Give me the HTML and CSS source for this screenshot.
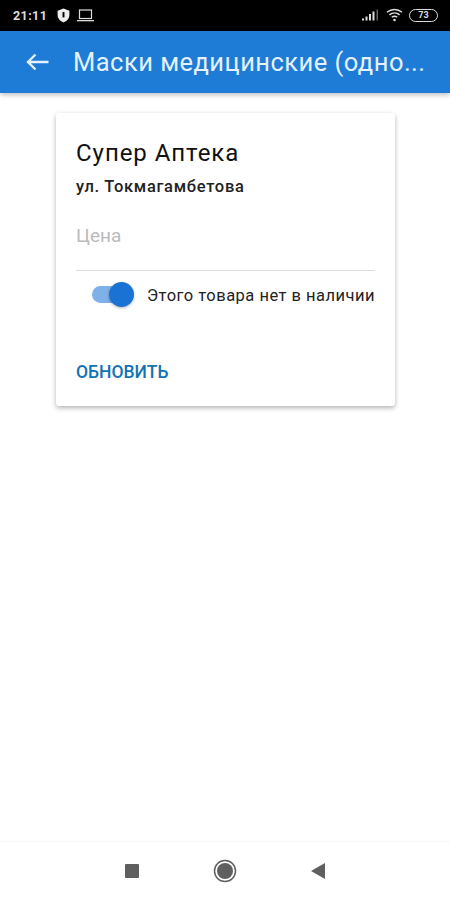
FILE: index.html
```html
<!DOCTYPE html>
<html lang="ru">
<head>
    <meta charset="UTF-8">
    <meta name="viewport" content="width=device-width, initial-scale=1.0">
    <title>Маски медицинские</title>
    <link rel="stylesheet" href="styles.css">
</head>
<body>
    <div class="screen">
        <div class="status-bar">
            <div class="status-left">
                <span class="clock">21:11</span>
                <svg class="ic-shield" width="13" height="15" viewBox="0 0 12 14">
                    <path d="M6 .5 11.5 2.600v4c0 3.200-2.300 5.700-5.500 6.900C2.800 12.300.5 9.800.5 6.600v-4z" fill="#eee"/>
                    <rect x="5.100" y="3.800" width="1.800" height="5" fill="#000"/>
                </svg>
                <svg class="ic-laptop" width="17" height="13" viewBox="0 0 17 13">
                    <rect x="2.500" y="1" width="12" height="8.500" fill="none" stroke="#ddd" stroke-width="1.200"/>
                    <rect x="0" y="11" width="17" height="1.300" fill="#ddd"/>
                </svg>
            </div>
            <div class="status-right">
                <svg width="18" height="12" viewBox="0 0 18 12">
                    <rect x="0" y="9.500" width="2" height="2" fill="#ddd"/>
                    <rect x="3.500" y="7.500" width="2" height="4" fill="#ddd"/>
                    <rect x="7" y="5" width="2" height="6.500" fill="#ddd"/>
                    <rect x="10.500" y="2.500" width="2" height="9" fill="#ddd"/>
                    <rect x="14.500" y="0.500" width="1.500" height="11" fill="#666"/>
                </svg>
                <svg width="17" height="14" viewBox="0 0 17 14">
                    <path d="M1 4.200C5.300.500 11.700.500 16 4.200M3.400 6.800c3-2.500 7.200-2.500 10.200 0M5.800 9.200c1.600-1.200 3.800-1.200 5.400 0" fill="none" stroke="#ddd" stroke-width="1.500"/>
                    <circle cx="8.500" cy="12" r="1.300" fill="#ddd"/>
                </svg>
                <div class="battery"><span class="battery-level">73</span></div>
            </div>
        </div>

        <header class="app-bar">
            <svg class="ic-back" width="24" height="18" viewBox="0 0 24 18">
                <path d="M23.500 9H3M10.500 1.500 3 9l7.500 7.500" fill="none" stroke="#e3f2fd" stroke-width="2.400"/>
            </svg>
            <h1 class="app-title">Маски медицинские (одно...</h1>
        </header>

        <main class="content">
            <div class="card">
                <h2 class="shop-name">Супер Аптека</h2>
                <p class="shop-address">ул. Токмагамбетова</p>
                <div class="price-field">Цена</div>
                <div class="stock-row">
                    <div class="switch">
                        <span class="switch-track"></span>
                        <span class="switch-thumb"></span>
                    </div>
                    <span class="stock-label">Этого товара нет в наличии</span>
                </div>
                <button class="update-btn">ОБНОВИТЬ</button>
            </div>
        </main>

        <nav class="nav-bar">
            <svg width="16" height="16" viewBox="0 0 16 16"><rect x="1" y="1" width="14" height="14" rx="1" fill="#5f5f5f"/></svg>
            <svg width="24" height="24" viewBox="0 0 24 24">
                <circle cx="12" cy="12" r="10.500" fill="none" stroke="#5f5f5f" stroke-width="1.500"/>
                <circle cx="12" cy="12" r="8" fill="#5f5f5f"/>
            </svg>
            <svg width="16" height="18" viewBox="0 0 16 18"><path d="M15 1v16L1 9z" fill="#5f5f5f"/></svg>
        </nav>
    </div>
</body>
</html>
```

FILE: styles.css
```css
* {
    box-sizing: border-box;
}
body {
    margin: 0;
    font-family: Roboto, "Noto Sans", sans-serif;
    background-color: #fff;
}
.screen {
    width: 450px;
    height: 900px;
    display: flex;
    flex-direction: column;
    overflow: hidden;
}
.status-bar {
    height: 31px;
    flex-shrink: 0;
    background-color: #000;
    color: #ddd;
    display: flex;
    justify-content: space-between;
    align-items: center;
    padding: 0 12px 1px 13px;
}
.status-left, .status-right {
    display: flex;
    align-items: center;
}
.clock {
    font-size: 12.500px;
    font-weight: 700;
    letter-spacing: 0.4px;
    margin-right: 10px;
}
.ic-shield {
    margin-right: 7px;
}
.status-right svg {
    margin-right: 6px;
}
.battery {
    width: 29px;
    height: 13px;
    border: 1.500px solid #ddd;
    border-radius: 7px;
    display: flex;
    align-items: center;
    justify-content: center;
}
.battery-level {
    font-size: 9px;
    font-weight: 700;
    line-height: 1;
}
.app-bar {
    height: 62px;
    flex-shrink: 0;
    background-color: #1e7bd6;
    box-shadow: 0 2px 5px rgba(0,0,0,0.25);
    display: flex;
    align-items: center;
    padding: 0 20px 0 25px;
}
.ic-back {
    flex-shrink: 0;
    margin-right: 24px;
}
.app-title {
    margin: 0;
    font-size: 25.500px;
    font-weight: 400;
    color: #e3f2fd;
    letter-spacing: 0.47px;
    white-space: nowrap;
}
.content {
    flex: 1;
    padding: 20px 55px 0 56px;
}
.card {
    height: 293px;
    padding: 26px 20px 0;
    border-radius: 3px;
    background-color: #fff;
    box-shadow: 0 2px 5px rgba(0,0,0,0.3);
}
.shop-name {
    margin: 0;
    font-size: 24px;
    line-height: 28px;
    font-weight: 400;
    color: #111;
    letter-spacing: 0.95px;
}
.shop-address {
    margin: 10px 0 0;
    font-size: 16.500px;
    line-height: 20px;
    font-weight: 500;
    color: #222;
    letter-spacing: 0.7px;
}
.price-field {
    margin-top: 17px;
    height: 57px;
    padding-top: 10px;
    font-size: 19px;
    line-height: 24px;
    color: #bbb;
    border-bottom: 1px solid #ddd;
}
.stock-row {
    display: flex;
    align-items: center;
    margin-top: 11px;
    padding-left: 16px;
}
.switch {
    position: relative;
    width: 44px;
    height: 26px;
    margin-right: 11px;
    flex-shrink: 0;
}
.switch-track {
    display: block;
    width: 33px;
    height: 17px;
    margin-top: 4px;
    border-radius: 9px;
    background-color: #7fb0e8;
}
.switch-thumb {
    position: absolute;
    left: 17px;
    top: 0;
    width: 25px;
    height: 25px;
    border-radius: 50%;
    background-color: #1a73d4;
    box-shadow: 0 1px 3px rgba(0,0,0,0.3);
}
.stock-label {
    font-size: 16.500px;
    color: #222;
    letter-spacing: 0.48px;
    white-space: nowrap;
}
.update-btn {
    display: block;
    margin-top: 54px;
    padding: 0;
    border: 0;
    background: none;
    font-family: inherit;
    font-size: 17.500px;
    line-height: 20px;
    font-weight: 500;
    color: #1272b5;
}
.nav-bar {
    height: 59px;
    flex-shrink: 0;
    border-top: 1px solid #f7f7f7;
    display: flex;
    align-items: center;
    padding: 0 124px;
    justify-content: space-between;
}
```
